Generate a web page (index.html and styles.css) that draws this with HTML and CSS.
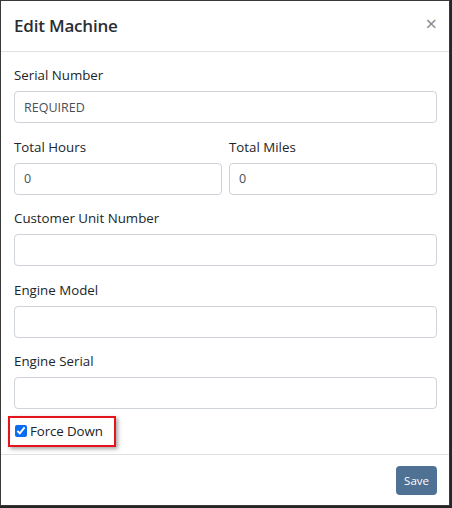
FILE: index.html
```html
<html>
  <head>
    <title>Edit Machine</title>
    <link rel="stylesheet" href="styles.css">
  </head>
  <body>
    <div class="modal">
      <div class="modal-header">
        <h5 class="modal-title">Edit Machine</h5>
        <span class="close">&times;</span>
      </div>

      <div class="modal-body">
        <div class="form-group">
          <label>Serial Number</label>
          <input type="text" class="form-control" value="REQUIRED" />
        </div>

        <div class="form-row">
          <div class="form-group">
            <label>Total Hours</label>
            <input type="text" class="form-control" value="0" />
          </div>
          <div class="form-group">
            <label>Total Miles</label>
            <input type="text" class="form-control" value="0" />
          </div>
        </div>

        <div class="form-group">
          <label>Customer Unit Number</label>
          <input type="text" class="form-control" />
        </div>

        <div class="form-group">
          <label>Engine Model</label>
          <input type="text" class="form-control" />
        </div>

        <div class="form-group">
          <label>Engine Serial</label>
          <input type="text" class="form-control" />
        </div>

        <!-- highlighted with a red box in the screenshot -->
        <div class="highlight">
          <input type="checkbox" id="forceDown" checked />
          <label for="forceDown">Force Down</label>
        </div>
      </div>

      <div class="modal-footer">
        <button class="btn-save">Save</button>
      </div>
    </div>
  </body>
</html>
```

FILE: styles.css
```css
* {
  box-sizing: border-box;
}

body {
  margin: 0;
  background-color: #262626;
  font-family: "Open Sans", "Noto Sans", sans-serif;
  color: #212529;
}

.modal {
  width: 450px;
  height: 506px;
  background-color: #fff;
  border: 1px solid #3a3a3a;
  display: flex;
  flex-direction: column;
}

.modal-header {
  display: flex;
  justify-content: space-between;
  align-items: flex-start;
  padding: 13px 12px 13px 13px;
  border-bottom: 1px solid #dee2e6;
}

.modal-title {
  margin: 0;
  font-size: 17px;
  font-weight: 600;
  line-height: 24px;
  letter-spacing: -0.2px;
  color: #2a2e33;
}

.close {
  font-size: 20px;
  line-height: 20px;
  color: #888;
}

.modal-body {
  flex: 1;
  padding: 13px 12px 0 13px;
}

.form-group {
  margin-bottom: 13.5px;
}

.form-row {
  display: grid;
  grid-template-columns: 1fr 1fr;
  gap: 7px;
}

label {
  display: block;
  font-size: 13.3px;
  line-height: 21px;
  margin-bottom: 5px;
}

.form-control {
  display: block;
  width: 100%;
  height: 32px;
  padding: 0 9px;
  font-family: "Open Sans", "Noto Sans", sans-serif;
  font-size: 12.5px;
  color: #495057;
  border: 1px solid #ced4da;
  border-radius: 4px;
}

.highlight {
  display: inline-flex;
  align-items: center;
  gap: 3px;
  margin-left: -6px;
  margin-top: -7px;
  padding: 3px 11px 3px 5px;
  border: 2px solid #e5131b;
  box-shadow: 2px 2px 4px rgba(0, 0, 0, 0.35);
}

.highlight input {
  margin: 0;
  width: 12px;
  height: 12px;
  accent-color: #0a6cf0;
}

.highlight label {
  margin: 0;
  font-size: 13.3px;
  letter-spacing: -0.1px;
}

.modal-footer {
  display: flex;
  justify-content: flex-end;
  padding: 11px 12px 10px 12px;
  border-top: 1px solid #dee2e6;
}

.btn-save {
  height: 29px;
  padding: 0 8px;
  background-color: #4e7194;
  color: #fff;
  border: none;
  border-radius: 4px;
  font-family: "Open Sans", "Noto Sans", sans-serif;
  font-size: 11.5px;
}
```
